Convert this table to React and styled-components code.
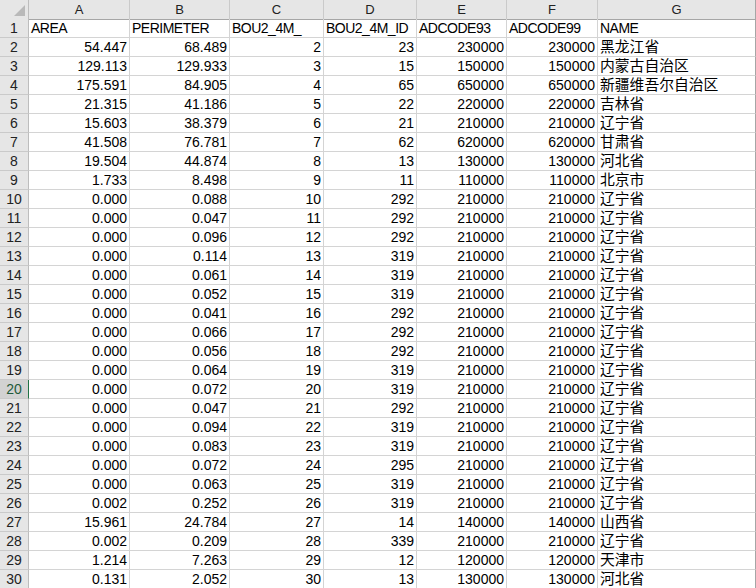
import React from 'react'
import styled, { createGlobalStyle } from 'styled-components'

const GlobalStyle = createGlobalStyle`
  html, body {
    margin: 0;
    padding: 0;
    background: #ffffff;
    overflow: hidden;
  }
  body {
    font-family: "Liberation Sans", "Noto Sans CJK SC", sans-serif;
  }
`

const Sheet = styled.div`
  display: grid;
  grid-template-columns: 29px 101px 100px 94px 93px 90px 91px 1fr;
  grid-auto-rows: 19px;
  width: 756px;
  height: 588px;
  overflow: hidden;
  color: #000;
`

const Corner = styled.div`
  height: 20px;
  box-sizing: border-box;
  background: #e6e6e6;
  border-right: 1px solid #bdbdbd;
  border-bottom: 1px solid #a6a6a6;
  display: flex;
  align-items: flex-end;
  justify-content: flex-end;
  padding: 0 3px 3px 0;
`

const ColHead = styled.div`
  height: 20px;
  box-sizing: border-box;
  background: #e6e6e6;
  border-right: 1px solid ${p => (p.$last ? '#a6a6a6' : '#cacaca')};
  border-bottom: 1px solid #a6a6a6;
  font-size: 13px;
  line-height: 19px;
  text-align: center;
  color: #222;
`

const RowHead = styled.div`
  box-sizing: border-box;
  background: ${p => (p.$active ? '#d2d2d2' : '#e6e6e6')};
  border-right: 1px solid ${p => (p.$active ? '#217346' : '#bdbdbd')};
  border-bottom: 1px solid #cacaca;
  font-size: 14px;
  line-height: 18px;
  text-align: center;
  color: ${p => (p.$active ? '#1e5a3a' : '#222')};
`

const Cell = styled.div`
  box-sizing: border-box;
  border-right: 1px solid ${p => (p.$last ? '#a6a6a6' : '#d4d4d4')};
  border-bottom: 1px solid #d4d4d4;
  font-size: ${p => (p.$cjk ? '14.8px' : '14px')};
  line-height: 18px;
  padding: 0 2px;
  white-space: nowrap;
  overflow: visible;
  text-align: ${p => (p.$num ? 'right' : 'left')};
  letter-spacing: ${p => (p.$latin ? '-0.5px' : '0')};
`

const headers = ['AREA', 'PERIMETER', 'BOU2_4M_', 'BOU2_4M_ID', 'ADCODE93', 'ADCODE99', 'NAME']

const rows = [
  ['54.447', '68.489', 2, 23, 230000, 230000, '黑龙江省'],
  ['129.113', '129.933', 3, 15, 150000, 150000, '内蒙古自治区'],
  ['175.591', '84.905', 4, 65, 650000, 650000, '新疆维吾尔自治区'],
  ['21.315', '41.186', 5, 22, 220000, 220000, '吉林省'],
  ['15.603', '38.379', 6, 21, 210000, 210000, '辽宁省'],
  ['41.508', '76.781', 7, 62, 620000, 620000, '甘肃省'],
  ['19.504', '44.874', 8, 13, 130000, 130000, '河北省'],
  ['1.733', '8.498', 9, 11, 110000, 110000, '北京市'],
  ['0.000', '0.088', 10, 292, 210000, 210000, '辽宁省'],
  ['0.000', '0.047', 11, 292, 210000, 210000, '辽宁省'],
  ['0.000', '0.096', 12, 292, 210000, 210000, '辽宁省'],
  ['0.000', '0.114', 13, 319, 210000, 210000, '辽宁省'],
  ['0.000', '0.061', 14, 319, 210000, 210000, '辽宁省'],
  ['0.000', '0.052', 15, 319, 210000, 210000, '辽宁省'],
  ['0.000', '0.041', 16, 292, 210000, 210000, '辽宁省'],
  ['0.000', '0.066', 17, 292, 210000, 210000, '辽宁省'],
  ['0.000', '0.056', 18, 292, 210000, 210000, '辽宁省'],
  ['0.000', '0.064', 19, 319, 210000, 210000, '辽宁省'],
  ['0.000', '0.072', 20, 319, 210000, 210000, '辽宁省'],
  ['0.000', '0.047', 21, 292, 210000, 210000, '辽宁省'],
  ['0.000', '0.094', 22, 319, 210000, 210000, '辽宁省'],
  ['0.000', '0.083', 23, 319, 210000, 210000, '辽宁省'],
  ['0.000', '0.072', 24, 295, 210000, 210000, '辽宁省'],
  ['0.000', '0.063', 25, 319, 210000, 210000, '辽宁省'],
  ['0.002', '0.252', 26, 319, 210000, 210000, '辽宁省'],
  ['15.961', '24.784', 27, 14, 140000, 140000, '山西省'],
  ['0.002', '0.209', 28, 339, 210000, 210000, '辽宁省'],
  ['1.214', '7.263', 29, 12, 120000, 120000, '天津市'],
  ['0.131', '2.052', 30, 13, 130000, 130000, '河北省'],
]

const ACTIVE_ROW = 20

const App = () => (
  <>
    <GlobalStyle />
    <Sheet>
      <Corner>
        <svg width="11" height="11" viewBox="0 0 11 11">
          <polygon points="11,0 11,11 0,11" fill="#b9b9b9" />
        </svg>
      </Corner>
      {['A', 'B', 'C', 'D', 'E', 'F', 'G'].map((c, i) => (
        <ColHead key={c} $last={i === 6}>{c}</ColHead>
      ))}

      <RowHead>1</RowHead>
      {headers.map((h, i) => (
        <Cell key={h} $latin $last={i === 6}>{h}</Cell>
      ))}

      {rows.map((r, ri) => {
        const n = ri + 2
        return (
          <React.Fragment key={n}>
            <RowHead $active={n === ACTIVE_ROW}>{n}</RowHead>
            {r.map((v, ci) => (
              <Cell key={ci} $num={ci < 6} $cjk={ci === 6} $last={ci === 6}>{v}</Cell>
            ))}
          </React.Fragment>
        )
      })}
    </Sheet>
  </>
)

export default App
